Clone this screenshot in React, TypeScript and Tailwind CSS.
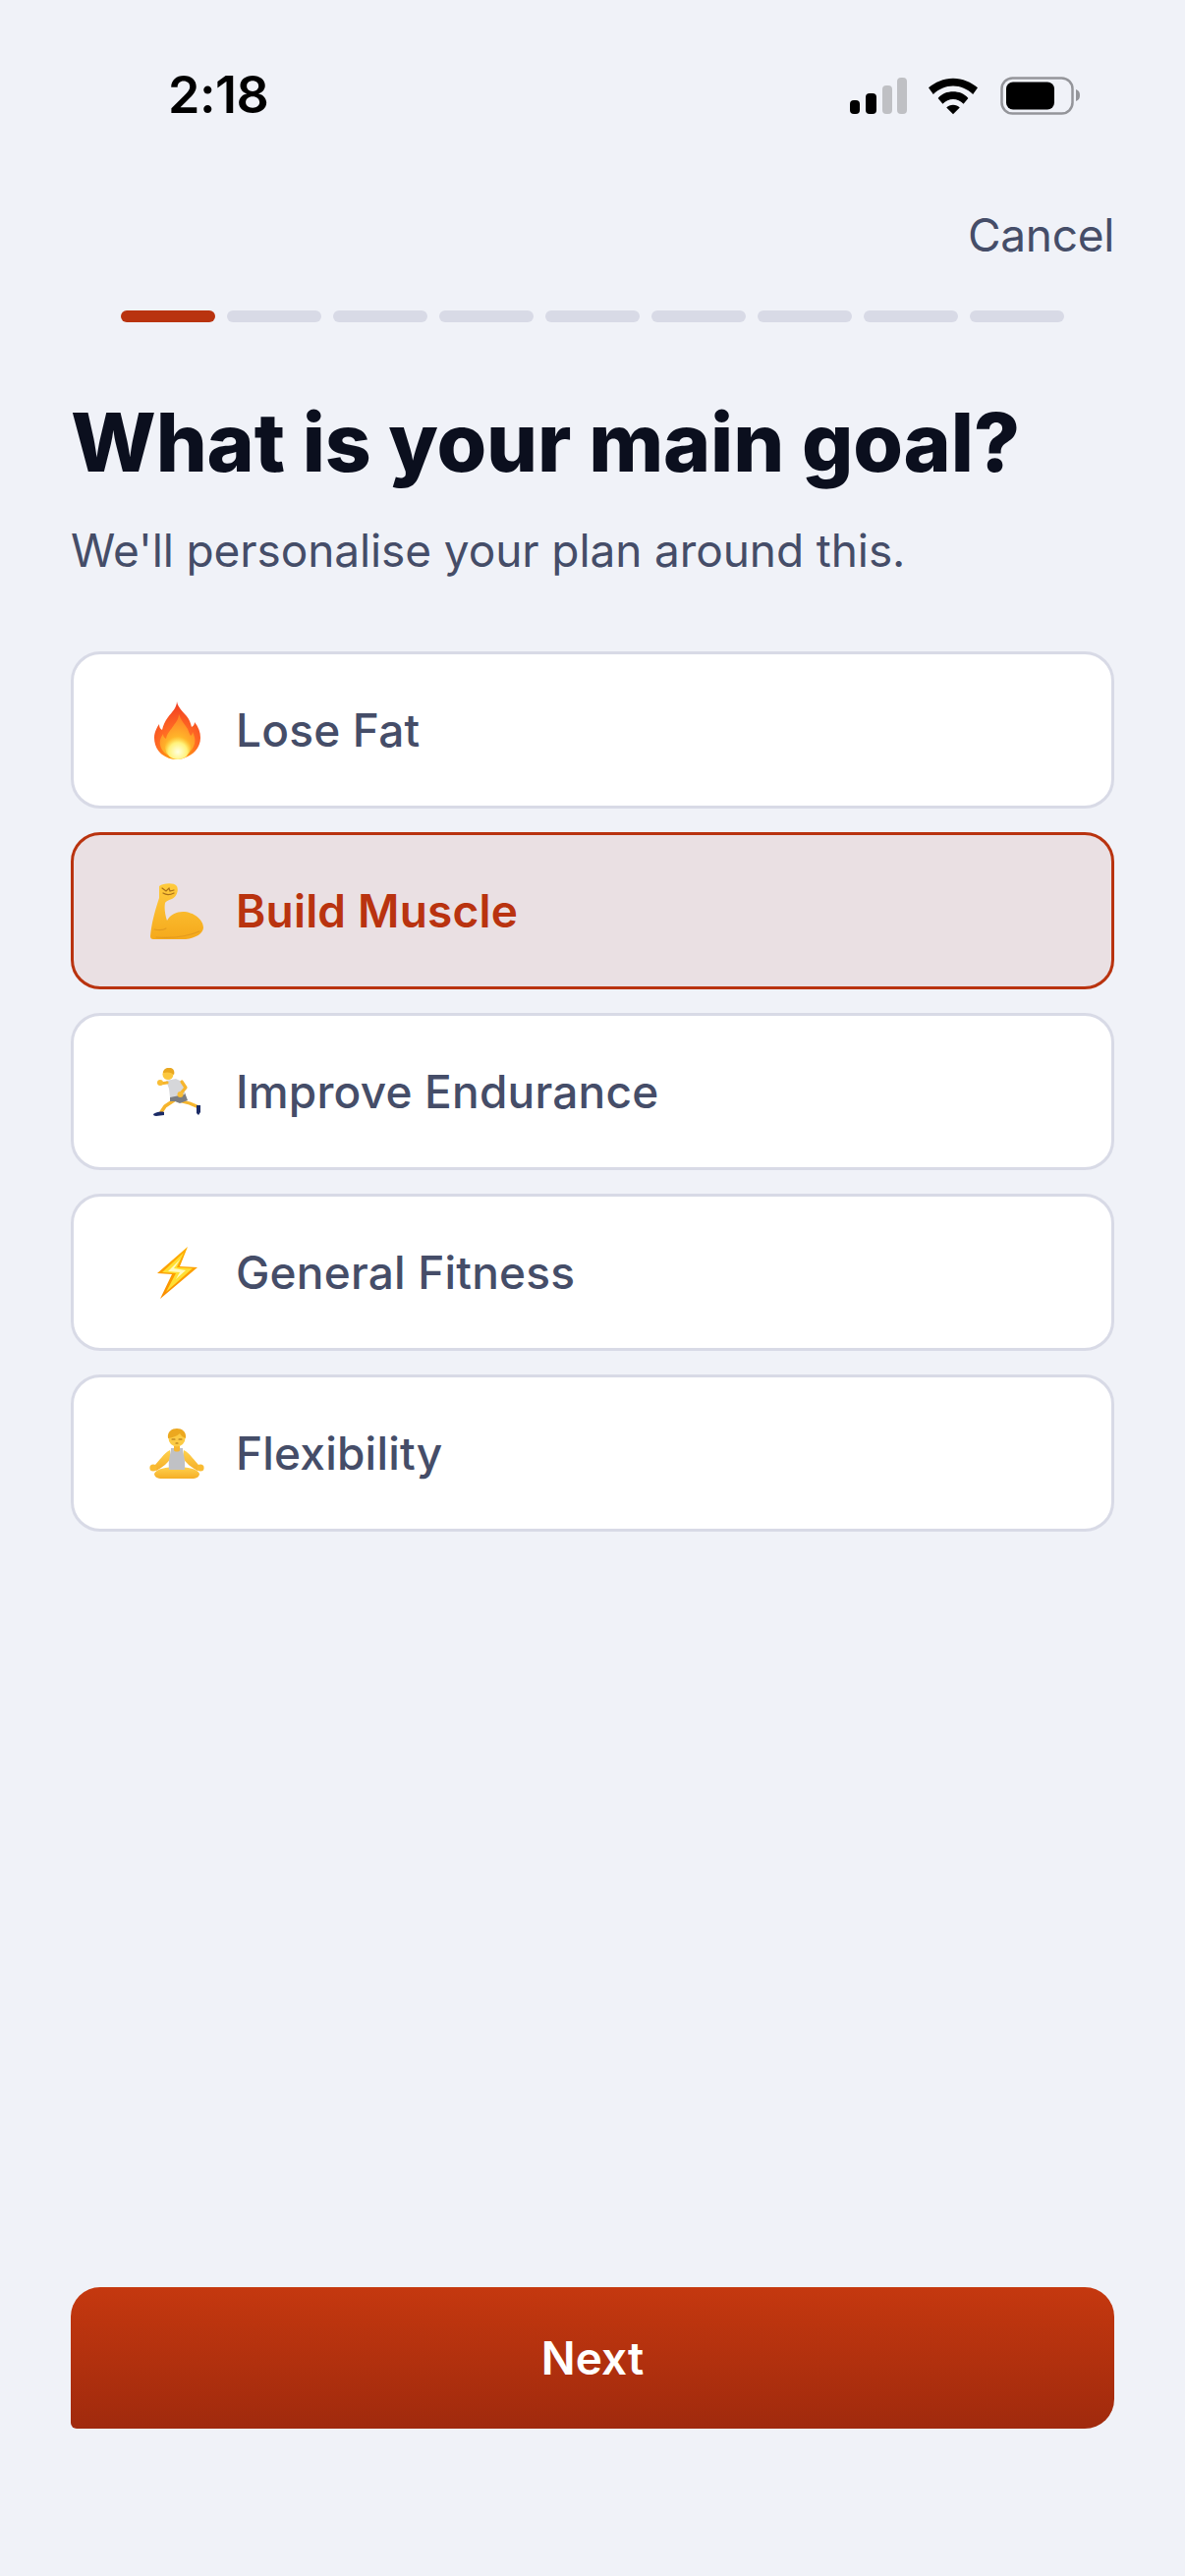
import React from "react";

const FONT = "font-['Inter',sans-serif]";

function FireEmoji() {
  return (
    <svg width="47" height="59" viewBox="0 0 47 59">
      <defs>
        <radialGradient id="fireOuter" cx="50%" cy="90%" r="90%">
          <stop offset="0%" stopColor="#ffb300" />
          <stop offset="50%" stopColor="#ff6a24" />
          <stop offset="100%" stopColor="#f03a20" />
        </radialGradient>
        <radialGradient id="fireInner" cx="50%" cy="85%" r="75%">
          <stop offset="0%" stopColor="#fff176" />
          <stop offset="45%" stopColor="#ffb52a" />
          <stop offset="100%" stopColor="#ff8426" />
        </radialGradient>
        <radialGradient id="fireCore" cx="50%" cy="70%" r="60%">
          <stop offset="0%" stopColor="#ffffe0" />
          <stop offset="60%" stopColor="#fff27a" />
          <stop offset="100%" stopColor="#ffd23c" stopOpacity="0" />
        </radialGradient>
      </defs>
      <path
        d="M23 0C24 6 29 10 33 15C36 19 37 22 38 26C40 25 41 23 41 21C45 26 47 31 47 37C47 46 41 53 34 56C30 58 27 59 23 59C17 59 12 57 8 54C3 50 0 44 0 37C0 31 3 26 5 23C5 26 6 28 8 29C9 24 11 20 14 16C18 11 23 6 23 0Z"
        fill="url(#fireOuter)"
      />
      <path
        d="M25 13C27 19 31 23 34 28C35 31 36 33 37 35C38 34 39 33 39 31C41 35 42 39 41 43C39 50 33 56 24 57C14 57 7 51 6 44C5 40 7 36 9 33C9 35 10 37 12 38C13 32 17 29 20 24C23 20 25 17 25 13Z"
        fill="url(#fireInner)"
      />
      <ellipse cx="24" cy="46" rx="13" ry="13" fill="url(#fireCore)" />
    </svg>
  );
}

function MuscleEmoji() {
  return (
    <svg width="54" height="57" viewBox="0 0 54 57">
      <defs>
        <linearGradient id="arm" x1="0" y1="0" x2="0" y2="1">
          <stop offset="0%" stopColor="#ffcb3d" />
          <stop offset="100%" stopColor="#f5a91c" />
        </linearGradient>
      </defs>
      <path
        d="M9 3C13 0 24-1 27 3C29 7 27 14 22 16C19 17 16 18 15 20C14 26 15 32 17 38C20 32 27 29 33 29C44 29 54 37 54 45C54 51 46 56 36 57L3 57C1 57 0 56 0 54C1 42 4 30 9 15Z"
        fill="url(#arm)"
      />
      <path d="M12 5l4 3 3-3 1 3 4-1M13 10c3 2 7 2 11 0" fill="none" stroke="#a9701a" strokeWidth="1.2" strokeLinecap="round" />
      <path d="M4 47c5 1 9 1 12-1M6 55c14 1 30 0 44-6" fill="none" stroke="#e39a1f" strokeWidth="1.2" strokeLinecap="round" />
    </svg>
  );
}

function RunnerEmoji() {
  return (
    <svg width="49" height="49" viewBox="0 0 49 49">
      {/* legs */}
      <path d="M21 33L12 39 8 45" fill="none" stroke="#f6b52d" strokeWidth="3.6" strokeLinecap="round" strokeLinejoin="round" />
      <path d="M29 34L37 36 44 39" fill="none" stroke="#f6b52d" strokeWidth="3.2" strokeLinecap="round" strokeLinejoin="round" />
      <path d="M0 47C3 45 7 44 11 45L11 48 3 49C1 49 0 48 0 47Z" fill="#1b2b66" />
      <path d="M44 38L48 38 48 45 46 48 44 46Z" fill="#1b2b66" />
      {/* shorts */}
      <path d="M17 28L32 25 35 33 27 36 22 34 17 34Z" fill="#7b7d82" />
      {/* shirt */}
      <path d="M13 13L23 11 31 15 32 27 17 30 16 21Z" fill="#d6d7da" />
      {/* arms */}
      <path d="M14 15L7 16" fill="none" stroke="#f6b52d" strokeWidth="3.2" strokeLinecap="round" />
      <circle cx="7" cy="15" r="3" fill="#f9bd35" />
      <path d="M29 14L33 20 28 26" fill="none" stroke="#f6b52d" strokeWidth="3.2" strokeLinecap="round" strokeLinejoin="round" />
      <circle cx="27.5" cy="27" r="3" fill="#f9bd35" />
      {/* head */}
      <circle cx="15" cy="6.5" r="5.5" fill="#fcc83f" />
      <path d="M10 5C10 1 14-1 18 0C21 1 22 4 21 7C18 4 14 4 10 5Z" fill="#e9a720" />
    </svg>
  );
}

function BoltEmoji() {
  return (
    <svg width="41" height="53" viewBox="0 0 41 53">
      <defs>
        <linearGradient id="boltEdge" x1="0" y1="0" x2="0" y2="1">
          <stop offset="0%" stopColor="#ffb000" />
          <stop offset="100%" stopColor="#fb8c00" />
        </linearGradient>
      </defs>
      <path d="M31 0L0 27 15 28 3 53 41 21 23 20Z" fill="url(#boltEdge)" />
      <path d="M27 6L5 26 19 27 9 46 36 22 20 21Z" fill="#ffdf33" />
      <path d="M24 12L11 25 23 26 19 33 29 24 17 22Z" fill="#fffac2" />
    </svg>
  );
}

function MeditateEmoji() {
  return (
    <svg width="56" height="51" viewBox="0 0 56 51">
      <defs>
        <linearGradient id="skin" x1="0" y1="0" x2="0" y2="1">
          <stop offset="0%" stopColor="#ffd24f" />
          <stop offset="100%" stopColor="#f5ae26" />
        </linearGradient>
      </defs>
      {/* arms */}
      <path d="M21 22C15 25 10 33 4 39L7 43C14 39 19 35 22 30Z" fill="url(#skin)" />
      <path d="M35 22C41 25 46 33 52 39L49 43C42 39 37 35 34 30Z" fill="url(#skin)" />
      <circle cx="4" cy="40" r="3.6" fill="#f9bb32" />
      <circle cx="52" cy="40" r="3.6" fill="#f9bb32" />
      {/* legs */}
      <path d="M5 46C7 41 17 39 28 39S49 41 51 46C51 49 48 51 43 51H13C8 51 5 49 5 46Z" fill="url(#skin)" />
      {/* tank */}
      <path d="M22 20H34C34 26 37 30 36 42H20C19 30 22 26 22 20Z" fill="#c0c1c5" />
      <path d="M25 18H31V22C31 24 25 24 25 22Z" fill="#f7b630" />
      {/* head */}
      <circle cx="28" cy="10" r="8.5" fill="#fccb45" />
      <path d="M19 10C18 3 23 0 28 0S38 3 37 10C34 9 32 7 31 5C28 8 24 9 19 10Z" fill="#eca81f" />
      <path d="M23 11h3M30 11h3M27 15h2" stroke="#a36a12" strokeWidth="1.1" strokeLinecap="round" />
    </svg>
  );
}

const goals = [
  { label: "Lose Fat", icon: <FireEmoji />, selected: false },
  { label: "Build Muscle", icon: <MuscleEmoji />, selected: true },
  { label: "Improve Endurance", icon: <RunnerEmoji />, selected: false },
  { label: "General Fitness", icon: <BoltEmoji />, selected: false },
  { label: "Flexibility", icon: <MeditateEmoji />, selected: false },
];

function StatusIcons() {
  return (
    <div className="flex items-center">
      <svg width="60" height="38" viewBox="0 0 60 38">
        <rect x="0" y="23" width="10" height="14" rx="4" fill="#000" />
        <rect x="16" y="16" width="11" height="21" rx="4" fill="#000" />
        <rect x="33" y="8" width="10" height="29" rx="4" fill="#bfc0c4" />
        <rect x="48" y="0" width="10" height="37" rx="4" fill="#bfc0c4" />
      </svg>
      <svg className="ml-[20px]" width="50" height="38" viewBox="0 0 52 38">
        <path d="M26 0c10 0 19 4 26 10l-5 7C41 11 34 8 26 8S11 11 5 17L0 10C7 4 16 0 26 0z" fill="#000" />
        <path d="M26 14c6 0 12 2 16 7l-5 6c-3-3-7-5-11-5s-8 2-11 5l-5-6c4-5 10-7 16-7z" fill="#000" />
        <path d="M26 28c3 0 5 1 7 3l-7 7-7-7c2-2 4-3 7-3z" fill="#000" />
      </svg>
      <svg className="ml-[23px]" width="82" height="40" viewBox="0 0 82 40">
        <rect x="1.5" y="1.5" width="72" height="36" rx="11" fill="none" stroke="#94959a" strokeWidth="2.5" />
        <rect x="6" y="5.5" width="49" height="28" rx="7" fill="#000" />
        <path d="M77 13c3 1 4 3 4 6s-1 5-4 6z" fill="#94959a" />
      </svg>
    </div>
  );
}

export default function App() {
  return (
    <div className={`${FONT} w-[1206px] h-[2622px] bg-[#f0f2f8] flex flex-col px-[72px]`}>
      {/* Status bar */}
      <div className="h-[132px] pt-[66px] flex items-start justify-between pl-[99px] pr-[34px]">
        <span className="text-[52px] leading-[64px] font-semibold text-black tracking-[-0.5px] -mt-[1px]">2:18</span>
        <div className="mt-[12px]">
          <StatusIcons />
        </div>
      </div>

      <div className="flex justify-end h-[56px] mt-[79px]">
        <span className="text-[46px] leading-[56px] tracking-[-0.3px] text-[#454d68]">Cancel</span>
      </div>

      {/* Progress */}
      <div className="flex gap-[12px] justify-center mt-[49px]">
        {Array.from({ length: 9 }).map((_, i) => (
          <div key={i} className={`w-[96px] h-[12px] rounded-full ${i === 0 ? "bg-[#b9330f]" : "bg-[#d8dae6]"}`} />
        ))}
      </div>

      <h1 className="mt-[75px] text-[82px] leading-[96px] font-[850] tracking-[-0.15px] text-[#0b0f1e]">What is your main goal?</h1>
      <p className="mt-[31px] text-[46px] leading-[60px] tracking-[-0.1px] text-[#454d68]">We'll personalise your plan around this.</p>

      {/* Goal options */}
      <div className="mt-[73px] flex flex-col gap-[24px]">
        {goals.map((goal) => (
          <div
            key={goal.label}
            className={`h-[160px] rounded-[30px] border-[3px] flex items-center pl-[75px] ${
              goal.selected ? "bg-[#eae0e3] border-[#b9330f]" : "bg-white border-[#d8dae6]"
            }`}
          >
            <div className="w-[60px] flex items-center justify-center shrink-0">{goal.icon}</div>
            <span
              className={`ml-[30px] text-[46px] leading-[56px] tracking-[0.2px] font-medium ${
                goal.selected ? "text-[#b9330f] font-semibold" : "text-[#454d68]"
              }`}
            >
              {goal.label}
            </span>
          </div>
        ))}
      </div>

      {/* Next button */}
      <div className="mt-auto mb-[150px] h-[144px] rounded-[30px] rounded-bl-[6px] bg-gradient-to-b from-[#c5380f] to-[#a02a0d] flex items-center justify-center">
        <span className="text-[46px] font-semibold text-white">Next</span>
      </div>
    </div>
  );
}
